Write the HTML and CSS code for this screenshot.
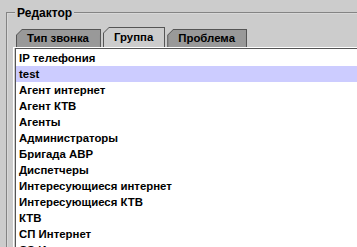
FILE: index.html
```
<!DOCTYPE html>
<html lang="ru">
<head>
    <meta charset="UTF-8">
    <title>Редактор</title>
    <link rel="stylesheet" href="styles.css">
</head>
<body>
    <fieldset class="editor">
        <legend>Редактор</legend>
        <div class="tabs">
            <div class="tab"><span>Тип звонка</span></div>
            <div class="tab active"><span>Группа</span></div>
            <div class="tab"><span>Проблема</span></div>
        </div>
        <div class="panel">
            <ul class="list">
                <li>IP телефония</li>
                <li class="selected">test</li>
                <li>Агент интернет</li>
                <li>Агент КТВ</li>
                <li>Агенты</li>
                <li>Администраторы</li>
                <li>Бригада АВР</li>
                <li>Диспетчеры</li>
                <li>Интересующиеся интернет</li>
                <li>Интересующиеся КТВ</li>
                <li>КТВ</li>
                <li>СП Интернет</li>
                <li>СЭ Интернет</li>
            </ul>
        </div>
    </fieldset>
</body>
</html>
```
FILE: styles.css
```
html, body {
    overflow: hidden;
}
body {
    margin: 0;
    background: #cccccc;
    font: bold 11.4px "Liberation Sans", Arial, sans-serif;
    color: #000;
}

.editor {
    margin: 6px 0 0 6px;
    width: 420px;
    height: 300px;
    padding: 0 0 0 5px;
    border: 2px groove #d8d8d8;
    border-right: 0;
    border-bottom: 0;
}
.editor legend {
    margin-left: 2px;
    padding: 0 2px;
    line-height: 14px;
    font-size: 12px;
}

.tabs {
    display: flex;
    align-items: flex-end;
    margin: 7px 0 0 3px;
    height: 20px;
}
.tab {
    height: 18px;
    padding: 1px 1px 0 1px;
    box-sizing: border-box;
    background: #555;
    clip-path: polygon(0 6px, 6px 0, 100% 0, 100% 100%, 0 100%);
    margin-right: 2px;
}
.tab span {
    display: block;
    height: 17px;
    line-height: 16px;
    padding: 0 11px 0 10px;
    background: #999999;
    clip-path: polygon(0 5px, 5px 0, 100% 0, 100% 100%, 0 100%);
}
.tab.active {
    height: 20px;
}
.tab.active span {
    height: 19px;
    line-height: 18px;
    background: #cccccc;
}

.panel {
    border-top: 1px solid #fff;
    border-left: 1px solid #fff;
    padding-left: 1px;
}
.list {
    list-style: none;
    margin: 0;
    padding: 1px 0 0 0;
    background: #fff;
    border-top: 1px solid #555;
    border-left: 1px solid #555;
}
.list li {
    height: 16px;
    line-height: 16px;
    padding-left: 3px;
}
.list li.selected {
    background: #ccccff;
}
```
